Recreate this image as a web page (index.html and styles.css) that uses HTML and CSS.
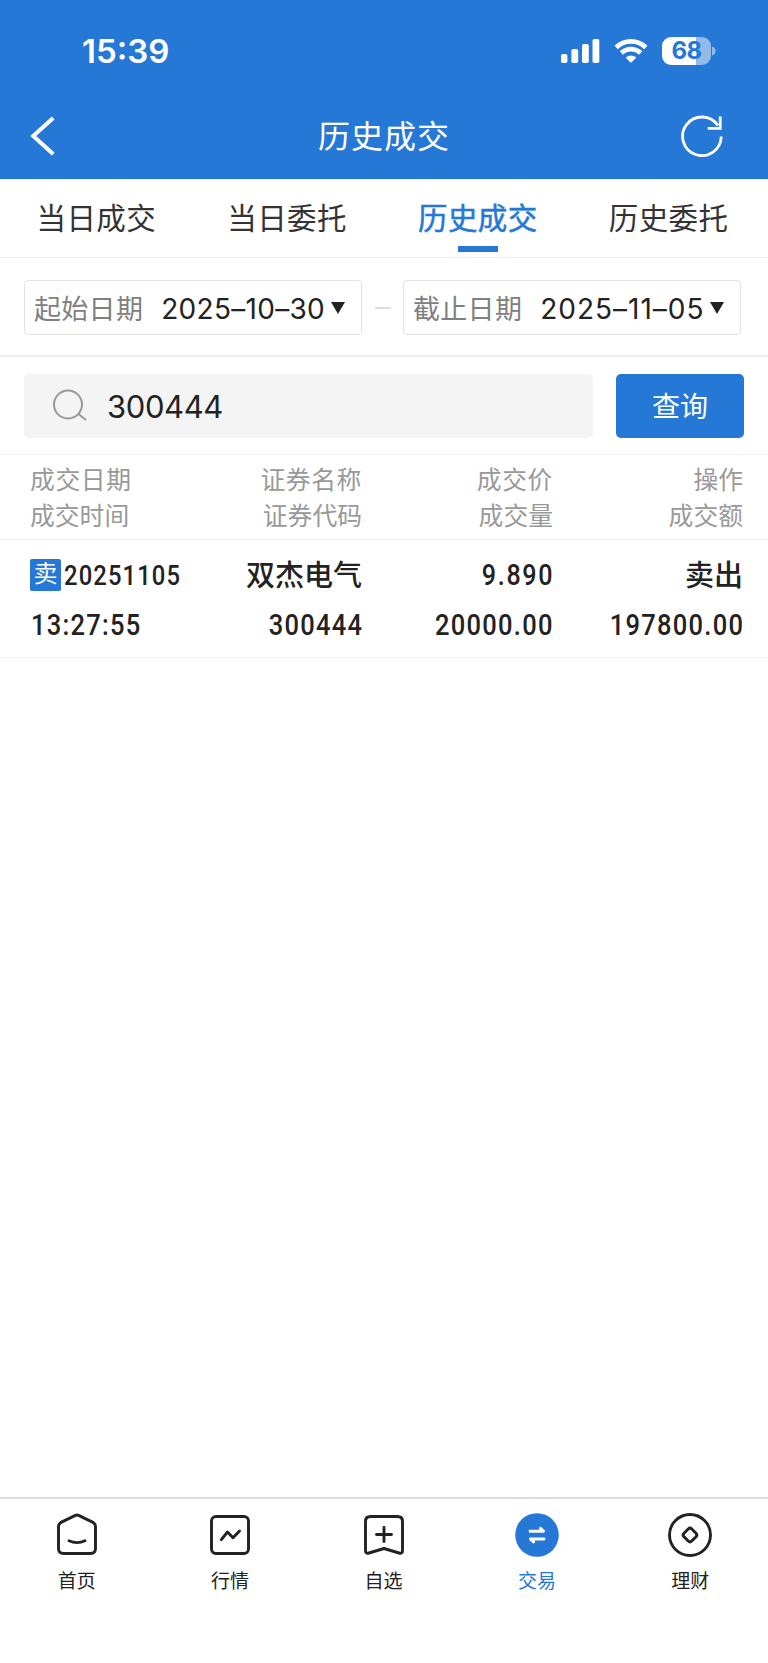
FILE: index.html
```html
<!DOCTYPE html>
<html lang="zh-CN">
<head>
    <meta charset="UTF-8">
    <meta name="viewport" content="width=device-width, initial-scale=1.0">
    <title>历史成交</title>
    <link rel="stylesheet" href="styles.css">
</head>
<body>
    <header class="header">
        <div class="status-bar">
            <span class="time">15:39</span>
            <div class="status-icons">
                <svg class="signal" width="39" height="24" viewBox="0 0 39 24" fill="#fff">
                    <rect x="0" y="15" width="6.4" height="9" rx="1.8"/>
                    <rect x="10.4" y="10" width="6.8" height="14" rx="1.8"/>
                    <rect x="21" y="5" width="6.8" height="19" rx="1.8"/>
                    <rect x="31.5" y="0" width="6.8" height="24" rx="1.8"/>
                </svg>
                <svg class="wifi" width="34" height="24" viewBox="0 0 34 24">
                    <path d="M2.200 8.400C10.600 .4 23.400 .4 31.800 8.400" fill="none" stroke="#fff" stroke-width="4.800"/>
                    <path d="M7.400 14.100C12.900 8.900 21.100 8.900 26.600 14.100" fill="none" stroke="#fff" stroke-width="4.800"/>
                    <path d="M11.700 18.500C14.800 15.700 19.200 15.700 22.300 18.500L17.700 23.200Q17 23.900 16.300 23.200Z" fill="#fff"/>
                </svg>
                <div class="battery">
                    <span class="battery-body">68</span>
                    <svg width="4" height="10" viewBox="0 0 4 10"><path d="M0 0.500Q3.600 1.600 3.600 5Q3.600 8.400 0 9.500Z" fill="#92bbea"/></svg>
                </div>
            </div>
        </div>
        <div class="nav">
            <svg class="back" width="26" height="40" viewBox="0 0 26 40"><path d="M23.200 2L3.200 20L23.200 38" fill="none" stroke="#fff" stroke-width="4"/></svg>
            <h1 class="title">历史成交</h1>
            <svg class="refresh" width="42" height="42" viewBox="0 0 42 42" fill="none" stroke="#fff" stroke-width="2.8">
                <path d="M40.200 21.500A19.300 19.300 0 1 1 36.900 10.500"/>
                <path d="M39.200 1.500V13.400H26.700"/>
            </svg>
        </div>
    </header>

    <nav class="tabs">
        <a class="tab">当日成交</a>
        <a class="tab">当日委托</a>
        <a class="tab active">历史成交</a>
        <a class="tab">历史委托</a>
    </nav>

    <section class="dates">
        <div class="date-box">
            <span class="date-label">起始日期</span>
            <span class="date-value">2025–10–30</span>
            <span class="arrow"></span>
        </div>
        <span class="dash"></span>
        <div class="date-box">
            <span class="date-label">截止日期</span>
            <span class="date-value end">2025–11–05</span>
            <span class="arrow"></span>
        </div>
    </section>

    <section class="search">
        <div class="search-box">
            <svg width="34" height="34" viewBox="0 0 34 34" fill="none" stroke="#999" stroke-width="2">
                <circle cx="15" cy="15.500" r="14"/>
                <path d="M25.500 25L33 31"/>
            </svg>
            <span class="keyword">300444</span>
        </div>
        <button class="query">查询</button>
    </section>

    <section class="table">
        <div class="row head">
            <div class="col"><span class="wide">成交日期</span><span>成交时间</span></div>
            <div class="col"><span class="wide">证券名称</span><span>证券代码</span></div>
            <div class="col"><span class="wide">成交价</span><span>成交量</span></div>
            <div class="col"><span>操作</span><span>成交额</span></div>
        </div>
        <div class="row item">
            <div class="col"><div class="day"><i class="badge">卖</i><span class="num">20251105</span></div><span class="num clock">13:27:55</span></div>
            <div class="col"><span class="name">双杰电气</span><span class="num">300444</span></div>
            <div class="col"><span class="num price">9.890</span><span class="num">20000.00</span></div>
            <div class="col"><span class="name">卖出</span><span class="num">197800.00</span></div>
        </div>
    </section>

    <footer class="tabbar">
        <a class="tabbar-item">
            <svg width="44" height="44" viewBox="0 0 44 44">
                <path d="M20.400 2.400Q22 1.500 23.600 2.400L37.500 9.100Q40.500 10.600 40.500 14V35.500Q40.500 40.500 35.500 40.500H8.500Q3.500 40.500 3.500 35.500V14Q3.500 10.600 6.500 9.100Z"/>
                <path d="M14 27.800Q22 31.500 30 27.800"/>
            </svg>
            <span>首页</span>
        </a>
        <a class="tabbar-item">
            <svg width="44" height="44" viewBox="0 0 44 44">
                <rect x="3.500" y="3.500" width="37" height="37" rx="4.500"/>
                <path d="M13.300 26.600L19.500 19L25 24.800L31.500 18"/>
            </svg>
            <span>行情</span>
        </a>
        <a class="tabbar-item">
            <svg width="44" height="44" viewBox="0 0 44 44">
                <path d="M8.500 3.500H35.500Q40.500 3.500 40.500 8.500V37.500Q40.500 41 37 40L22 35.500L7 40Q3.500 41 3.500 37.500V8.500Q3.500 3.500 8.500 3.500Z"/>
                <path d="M22 14.500V28.500M14.500 21.500H29.500"/>
            </svg>
            <span>自选</span>
        </a>
        <a class="tabbar-item current">
            <svg width="44" height="44" viewBox="0 0 44 44">
                <circle cx="22" cy="22" r="21.800" fill="#2578d6" stroke="none"/>
                <path d="M15 18.300H28.600L25.500 15.300V18M29 26H15.400L18.500 29V26.300" stroke="#fff"/>
            </svg>
            <span>交易</span>
        </a>
        <a class="tabbar-item">
            <svg width="44" height="44" viewBox="0 0 44 44">
                <circle cx="22" cy="22" r="20.500"/>
                <rect x="16.500" y="16.500" width="11" height="11" rx="2.500" transform="rotate(45 22 22)"/>
            </svg>
            <span>理财</span>
        </a>
    </footer>
</body>
</html>
```
FILE: styles.css
```css
* {
    box-sizing: border-box;
}

body {
    margin: 0;
    height: 1663px;
    display: flex;
    flex-direction: column;
    background-color: #fff;
    color: #222;
    font-family: Inter, "Noto Sans CJK SC", sans-serif;
    white-space: nowrap;
}

svg {
    display: block;
    flex: none;
}

.header {
    height: 179px;
    background-color: #2578d6;
    color: #fff;
}

.status-bar {
    height: 102px;
    padding: 0 52px 0 82px;
    display: flex;
    justify-content: space-between;
    align-items: center;
}

.time {
    font-size: 33px;
    font-weight: 600;
}

.status-icons {
    display: flex;
    align-items: center;
}

.wifi {
    margin: 0 14px;
}

.battery {
    display: flex;
    align-items: center;
    gap: 1px;
}

.battery-body {
    width: 49px;
    height: 28px;
    border-radius: 9px;
    background: linear-gradient(to right, #fff 34px, #92bbea 34px);
    color: #2578d6;
    font-size: 24px;
    font-weight: 700;
    line-height: 28px;
    letter-spacing: -0.5px;
    text-align: center;
}

.nav {
    height: 68px;
    padding: 0 45px 0 30px;
    display: flex;
    justify-content: space-between;
    align-items: center;
}

.title {
    margin: 0 0 4px 31px;
    font-size: 32px;
    font-weight: 400;
    letter-spacing: 1px;
}

.tabs {
    height: 79px;
    padding: 0 4px 0 1px;
    display: flex;
    border-bottom: 1px solid #eee;
}

.tab {
    flex: 1;
    display: flex;
    flex-direction: column;
    align-items: center;
    color: #333;
    font-size: 29.5px;
    line-height: 79px;
    letter-spacing: 0.4px;
}

.tab.active {
    color: #2578d6;
    -webkit-text-stroke: 0.5px #2578d6;
}

.tab.active::after {
    content: "";
    width: 40px;
    height: 6px;
    margin-top: -12px;
    background-color: #2578d6;
}

.dates {
    height: 99px;
    padding: 22px 27px 0 24px;
    display: flex;
    justify-content: space-between;
    border-bottom: 2px solid #eee;
}

.date-box {
    width: 338px;
    height: 55px;
    padding: 0 16px 0 9px;
    display: flex;
    align-items: center;
    border: 1px solid #e3e3e3;
    border-radius: 4px;
}

.date-label {
    color: #808080;
    font-size: 27px;
    letter-spacing: 0.3px;
}

.date-value {
    margin-left: 18px;
    padding-top: 2px;
    font-size: 28px;
    letter-spacing: 0.3px;
}

.date-value.end {
    letter-spacing: 1px;
}

.arrow {
    margin-left: auto;
    border: 7.5px solid transparent;
    border-top: 12px solid #222;
    border-bottom: 0;
}

.dash {
    width: 16px;
    height: 2px;
    margin-top: 27px;
    background-color: #ddd;
}

.search {
    height: 98px;
    padding: 17px 24px 0;
    display: flex;
    gap: 23px;
    border-bottom: 1px solid #f3f3f3;
}

.search-box {
    flex: 1;
    height: 64px;
    padding-left: 29px;
    display: flex;
    align-items: center;
    border-radius: 5px;
    background-color: #f4f4f4;
}

.keyword {
    margin-left: 20px;
    font-size: 31px;
    letter-spacing: -0.4px;
}

.query {
    width: 128px;
    height: 64px;
    padding: 0 0 2px;
    border: 0;
    border-radius: 5px;
    background-color: #2578d6;
    color: #fff;
    font-family: inherit;
    font-size: 28px;
}

.row {
    padding: 0 25px 0 30px;
    display: grid;
    grid-template-columns: 142px 190px 191px 190px;
    border-bottom: 1px solid #f3f3f3;
}

.col {
    display: flex;
    flex-direction: column;
    align-items: flex-end;
}

.col:first-child {
    align-items: flex-start;
}

.head {
    height: 85px;
    padding-top: 7px;
    color: #999;
    font-size: 24.8px;
    line-height: 36px;
}

.head .wide {
    letter-spacing: 0.6px;
}

.item {
    height: 118px;
    padding-top: 11px;
    font-family: Roboto, "Noto Sans CJK SC", sans-serif;
    font-weight: 500;
    line-height: 49px;
}

/* narrow digits */
.num {
    margin-right: -1px;
    font-size: 30px;
    letter-spacing: 1.5px;
    transform: scaleX(0.85);
    transform-origin: right;
}

.price {
    font-size: 29.5px;
    letter-spacing: 2px;
}

.col:first-child .num {
    transform-origin: left;
}

.clock {
    margin-left: 1px;
}

.day {
    display: flex;
    align-items: center;
    height: 49px;
    gap: 3px;
}

.day .num {
    font-size: 28px;
    letter-spacing: 1.3px;
}

.badge {
    width: 31px;
    height: 32px;
    margin-bottom: 1px;
    border-radius: 2px;
    background-color: #2578d6;
    color: #fff;
    font-size: 24px;
    font-style: normal;
    font-weight: 400;
    line-height: 31px;
    text-align: center;
}

.name {
    padding-top: 1px;
    margin-bottom: -1px;
    font-size: 29px;
}

.tabbar {
    height: 166px;
    margin-top: auto;
    padding: 14px 1px 0 0;
    display: flex;
    border-top: 2px solid #ddd;
}

.tabbar-item {
    flex: 1;
    display: flex;
    flex-direction: column;
    align-items: center;
    gap: 10px;
    font-size: 19px;
    line-height: 30px;
}

.tabbar-item svg {
    fill: none;
    stroke: #222;
    stroke-width: 2.9;
    stroke-linecap: round;
    stroke-linejoin: round;
}

.tabbar-item.current {
    color: #2578d6;
}
```
